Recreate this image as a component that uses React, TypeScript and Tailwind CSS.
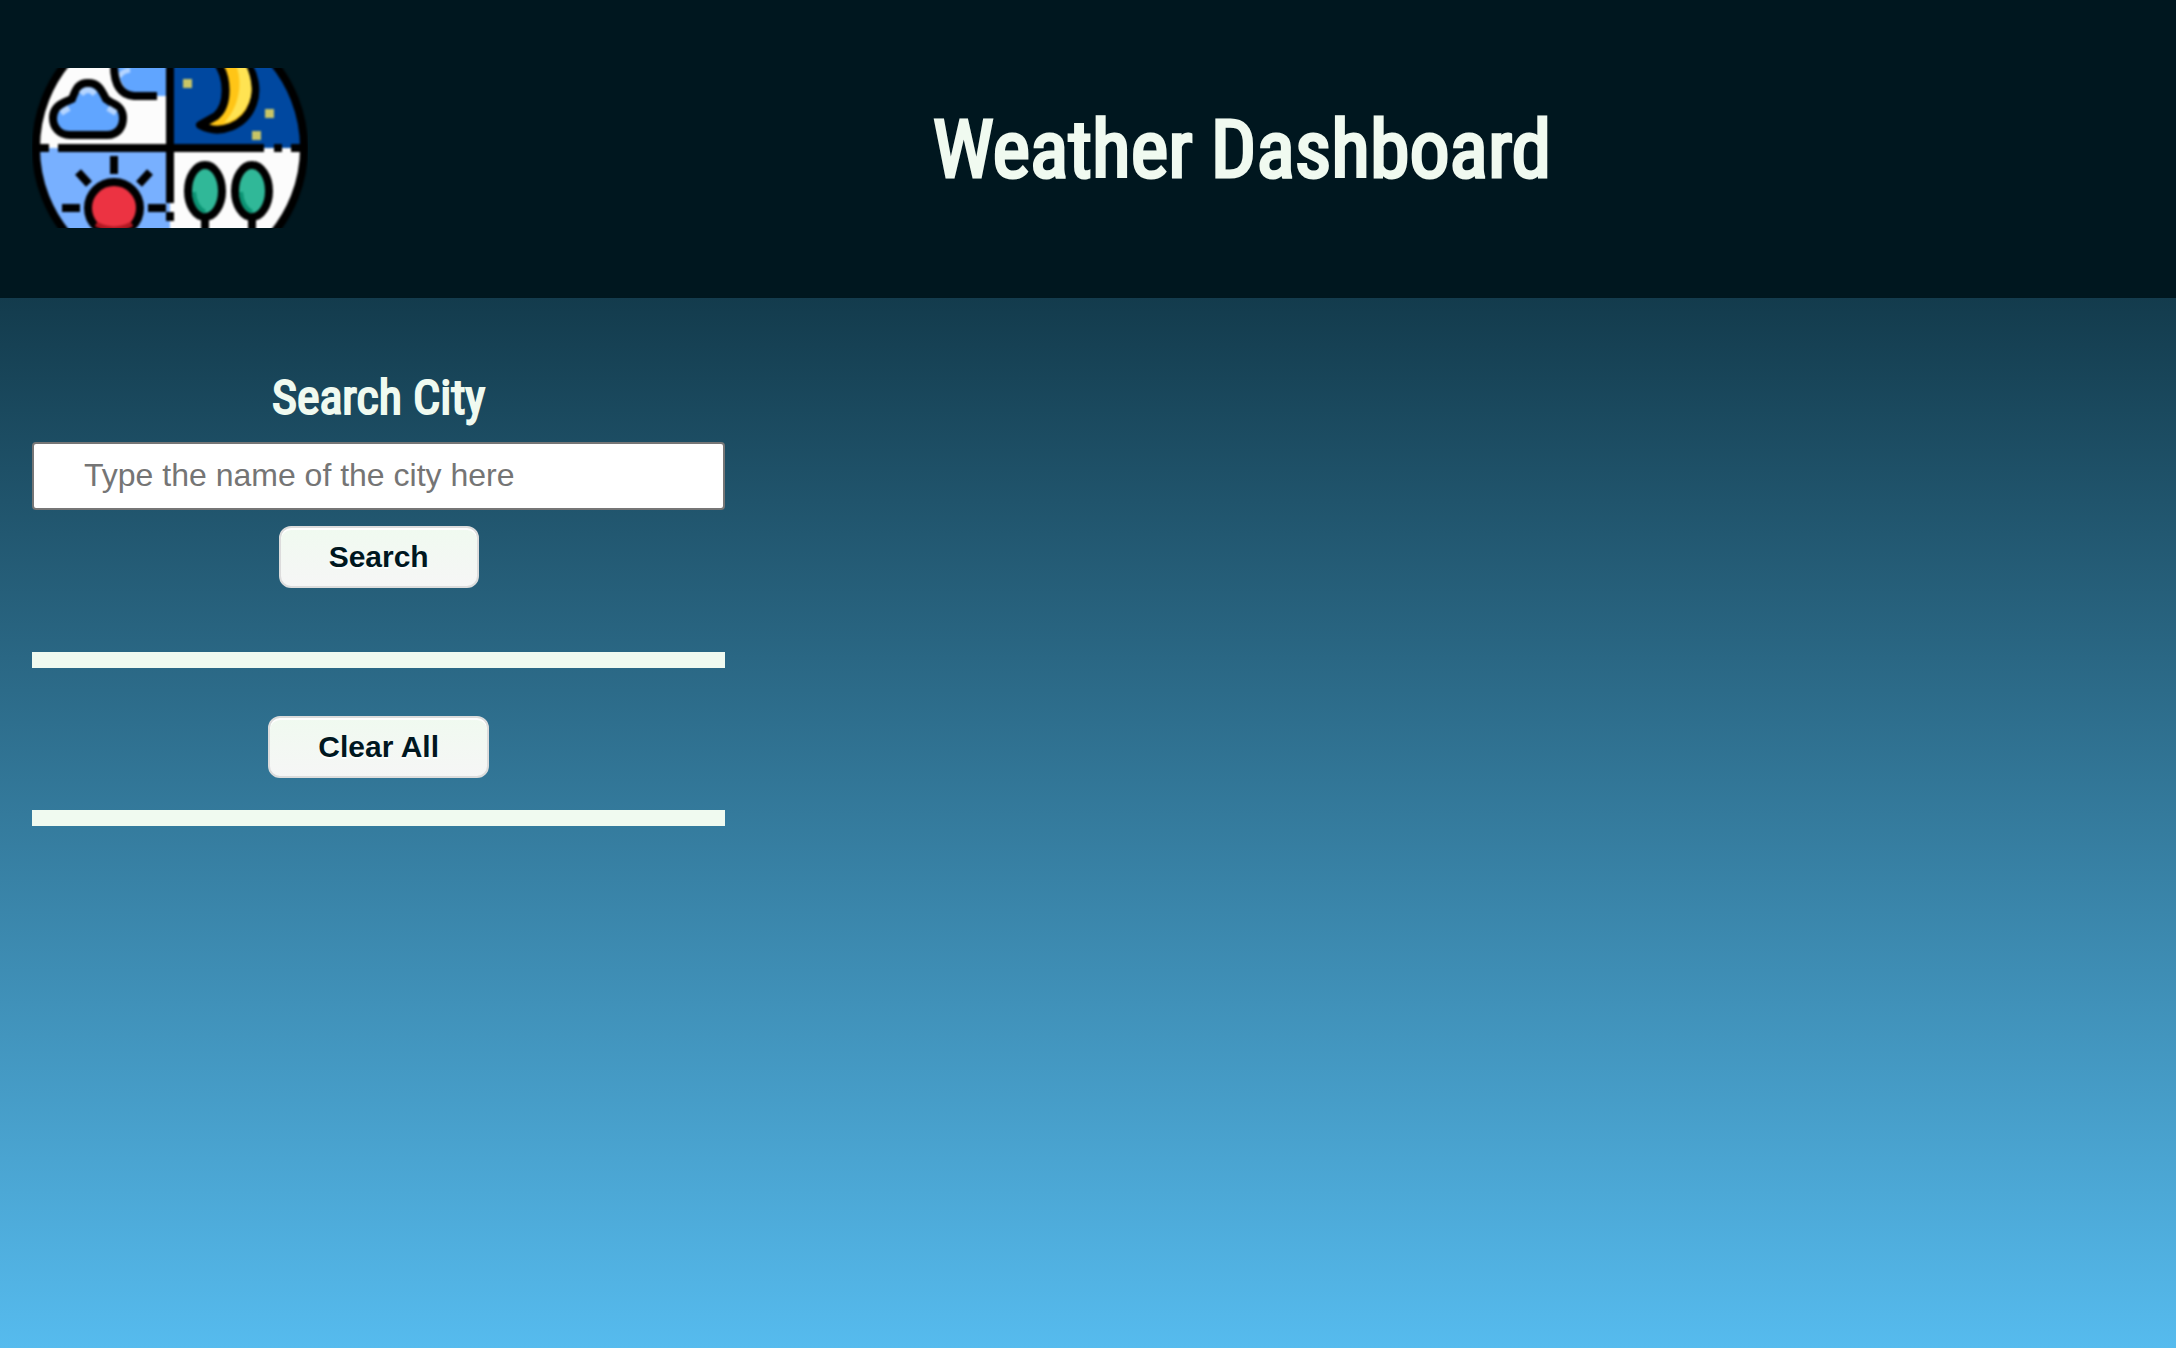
const buttonStyle =
  "h-[62px] rounded-xl border-2 border-[#dcdcdc] bg-linear-to-b/srgb from-[#f0faf0] to-[#f6f6f6] px-12 text-[30px] leading-[34px] font-bold text-[#00171f] shadow-[inset_0_2px_0_0_#ffffff] [text-shadow:0_2px_0_#ffffff]";

function Logo() {
  return (
    <svg viewBox="0 0 276 160" className="h-40 w-[276px] shrink-0" role="img" aria-label="Weather logo">
      <defs>
        <clipPath id="disc">
          <circle cx="138" cy="80" r="136" />
        </clipPath>
      </defs>
      <g className="blur-[1px]">
        <g clipPath="url(#disc)">
          <path fill="#fcfcfc" d="M0 -10H138V80H0z" />
          <path fill="#0048a0" d="M138 -10H286V80H138z" />
          <path fill="#78b0ff" d="M0 80H138V170H0z" />
          <path fill="#fcfcfc" d="M138 80H276V170H138z" />
          <path fill="#60a5ff" d="M84 -10Q86 20 102 28H138V-10z" />
          <path fill="none" stroke="#b5d5ff" strokeWidth="5" d="M87 9Q90 3 98 2" />
          <path fill="none" stroke="#000" strokeWidth="8" d="M82 -8C81 16 88 27 102 28H125" />
          <path
            fill="#60a5ff"
            stroke="#000"
            strokeWidth="8"
            d="M38 67C27 67 21 59 21 50C21 42 26 37 33 34L40 31C44 21 46 15 56 15C66 15 69 21 74 31L80 35C87 38 91 42 91 50C91 59 86 67 75 67z"
          />
          <path fill="none" stroke="#b5d5ff" strokeWidth="6" d="M49 26Q56 18 63 26M29 45L37 40M76 40L84 45" />
          <path
            fill="#ffc516"
            stroke="#000"
            strokeWidth="8"
            strokeLinejoin="round"
            d="M183 -8C197 8 197 37 184 48L168 57C188 68 213 58 221 36C226 22 223 6 213 -8z"
          />
          <path fill="#ffe352" d="M202 -8C212 12 208 38 192 55C207 52 216 40 219 28C221 14 217 2 211 -8z" />
          <path fill="#c8c566" d="M151 11h9v9h-9zM233 41h9v9h-9zM220 63h9v9h-9z" />
          <circle cx="82" cy="140" r="26" fill="#ec3342" stroke="#000" strokeWidth="8" />
          <path fill="none" stroke="#b01822" strokeWidth="5" d="M64 156Q82 166 100 156" />
          <path
            fill="none"
            stroke="#000"
            strokeWidth="8"
            d="M82 88V106M46 104L57 116M118 104L107 116M30 140H48M116 140H134"
          />
          <g fill="#30b898" stroke="#000" strokeWidth="8">
            <ellipse cx="173" cy="123" rx="17" ry="26" />
            <ellipse cx="220" cy="123" rx="17" ry="26" />
            <path d="M173 149V170M220 149V170" />
          </g>
          <path fill="none" stroke="#0a9272" strokeWidth="4" d="M162 124Q163 139 173 144M209 124Q210 139 220 144" />
          <path fill="none" stroke="#000" strokeWidth="8" d="M138 -10V135M138 144V153M0 80H17M26 80H232M242 80H250M259 80H276" />
        </g>
        <circle cx="138" cy="80" r="134" fill="none" stroke="#000" strokeWidth="8" />
      </g>
    </svg>
  );
}

export default function App() {
  return (
    <div className="flex min-h-screen flex-col bg-linear-to-b/srgb from-[#00171f] to-[#56bbee] font-['Liberation_Sans',Arial,sans-serif]">
      <header className="flex items-center bg-[#00171f] pt-[68px] pb-[70px] pl-8">
        <Logo />
        <h1 className="flex-1 pt-1 text-center font-['Roboto_Condensed',Roboto,sans-serif] text-[80px] leading-[96px] font-normal text-[#f0faf0] [-webkit-text-stroke:3px_#f0faf0]">
          Weather Dashboard
        </h1>
      </header>
      <main className="flex-1">
        <aside className="flex w-1/3 flex-col pt-16 pl-8">
          <form className="flex flex-col items-center" onSubmit={(e) => e.preventDefault()}>
            <label
              htmlFor="city"
              className="pt-1.5 pb-3.5 font-['Roboto_Condensed',Roboto,sans-serif] text-5xl leading-[60px] font-normal text-[#f0faf0] [-webkit-text-stroke:2px_#f0faf0]"
            >
              Search City
            </label>
            <input
              id="city"
              type="text"
              placeholder="Type the name of the city here"
              className="h-[68px] w-full rounded-sm border-2 border-[#767676] bg-white px-[50px] pb-0.5 text-[32px] text-black placeholder:text-[#757575]"
            />
            <button type="submit" className={`mt-4 ${buttonStyle}`}>
              Search
            </button>
          </form>
          <hr className="mt-16 mb-12 h-4 border-0 bg-[#f0faf0]" />
          <button type="button" className={`self-center ${buttonStyle}`}>
            Clear All
          </button>
          <hr className="mt-8 h-4 border-0 bg-[#f0faf0]" />
        </aside>
      </main>
    </div>
  );
}
